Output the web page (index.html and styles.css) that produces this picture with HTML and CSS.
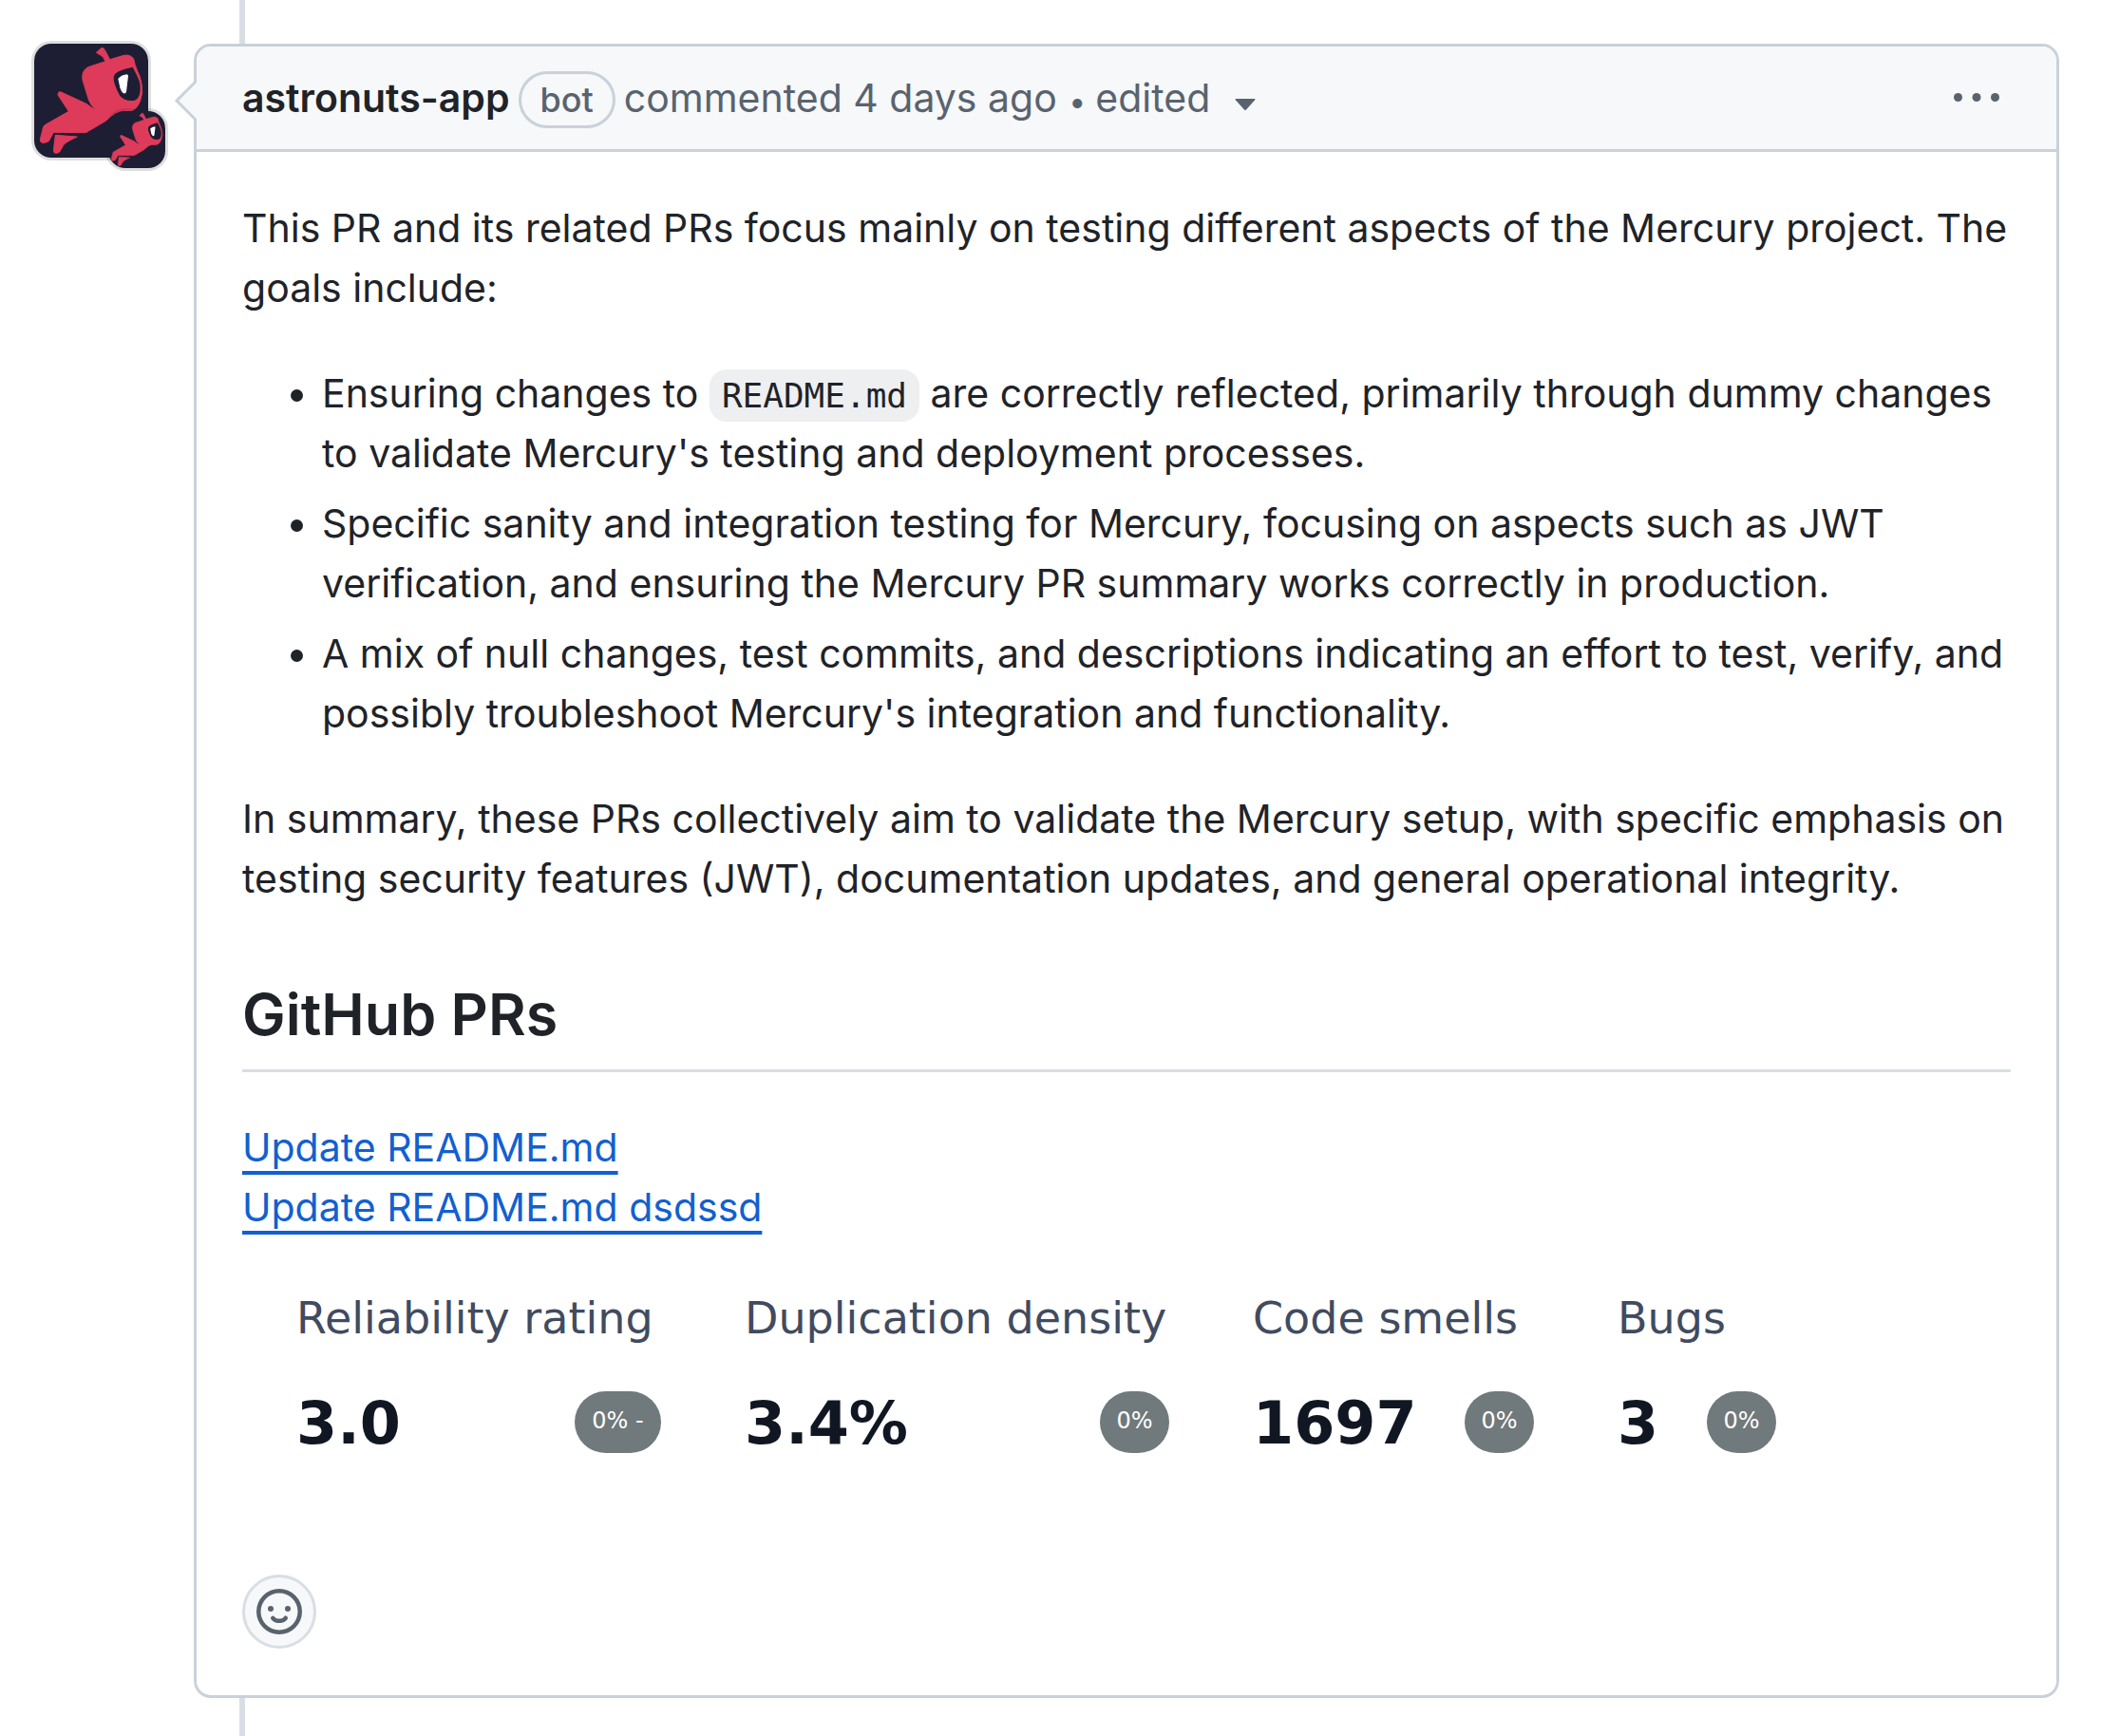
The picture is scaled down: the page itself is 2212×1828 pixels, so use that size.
FILE: index.html
```html
<!DOCTYPE html>
<html lang="en">
<head>
<meta charset="utf-8">
<title>Pull request comment</title>
<link rel="stylesheet" href="styles.css">
</head>
<body>
<svg class="defs" aria-hidden="true">
  <symbol id="astronaut" viewBox="0 0 360 360">
    <rect width="360" height="360" fill="#1d1e33"/>
    <g fill="#de3b5b" stroke="#de3b5b" stroke-width="3" stroke-linejoin="round">
      <path d="M196 28 L212 14 Q219 11 223 20 L239 50 L283 37 Q304 33 314 48 L319 68 Q326 88 334 105 Q342 130 341 155 Q337 182 326 198 Q316 211 303 213 L275 213 Q255 217 243 229 L226 244 L163 281 L61 280 L46 308 Q37 314 24 313 Q18 310 19 302 L29 263 Q31 258 37 255 L109 214 L75 162 Q74 151 83 152 L165 190 Q180 203 197 210 Q178 196 172 177 L153 115 Q148 86 170 74 L225 56 Q218 40 211 37 Z"/>
      <path d="M67 289 L136 294 Q105 308 93 319 L80 342 Q74 348 64 345 Q60 340 62 330 Z"/>
    </g>
    <path d="M311 74 Q322 93 332 118 Q338 142 332 162 Q326 180 310 180 Q286 182 271 165 Q261 148 255 130 Q249 111 252 103 Q255 94 266 88 Q288 78 311 74 Z" fill="#1d1e33"/>
    <path d="M265 111 Q276 98 294 97 L297 101 L291 152 Q288 160 281 156 Q274 150 271 139 Z" fill="#fff"/>
  </symbol>
</svg>
<main class="timeline-item">
  <a class="avatars" href="#profile" aria-label="astronuts-app">
    <svg class="avatar"><use href="#astronaut"/></svg>
    <svg class="avatar avatar-small"><use href="#astronaut"/></svg>
  </a>
  <article class="comment">
    <svg class="pointer" viewBox="0 0 24 46" aria-hidden="true"><path d="M24 2 L3 23 L24 44" fill="#f6f8fa" stroke="#c9d1d9" stroke-width="3"/></svg>
    <header class="comment-header">
      <a class="author" href="#profile">astronuts-app</a>
      <span class="label">bot</span>
      <span>commented <a class="muted" href="#comment">4 days ago</a> <span class="dot">•</span></span>
      <button class="edited" type="button">edited
        <svg class="caret" viewBox="0 0 22 12" aria-hidden="true"><path d="M1 0 H21 Q22 0 21 1.500 L12 11.500 Q11 12.500 10 11.500 L1 1.500 Q0 0 1 0 Z" fill="currentColor"/></svg>
      </button>
      <button class="more" type="button" aria-label="Show options">
        <svg viewBox="0 0 48 9" aria-hidden="true"><g fill="currentColor"><circle cx="4.500" cy="4.500" r="4.500"/><circle cx="24" cy="4.500" r="4.500"/><circle cx="43.500" cy="4.500" r="4.500"/></g></svg>
      </button>
    </header>
    <div class="comment-body">
      <p>This PR and its related PRs focus mainly on testing different aspects of the Mercury project. The goals include:</p>
      <ul>
        <li>Ensuring changes to <code>README.md</code> are correctly reflected, primarily through dummy changes to validate Mercury's testing and deployment processes.</li>
        <li>Specific sanity and integration testing for Mercury, focusing on aspects such as JWT verification, and ensuring the Mercury PR summary works correctly in production.</li>
        <li>A mix of null changes, test commits, and descriptions indicating an effort to test, verify, and possibly troubleshoot Mercury's integration and functionality.</li>
      </ul>
      <p>In summary, these PRs collectively aim to validate the Mercury setup, with specific emphasis on testing security features (JWT), documentation updates, and general operational integrity.</p>
      <h2>GitHub PRs</h2>
      <div class="links">
        <a href="#pr-1">Update README.md</a><br>
        <a href="#pr-2">Update README.md dsdssd</a>
      </div>
      <section class="metrics" aria-label="Code quality">
        <div class="metric"><h3>Reliability rating</h3><div class="reading"><strong>3.0</strong><span class="change change-wide">0% -</span></div></div>
        <div class="metric"><h3>Duplication density</h3><div class="reading"><strong>3.4%</strong><span class="change">0%</span></div></div>
        <div class="metric"><h3>Code smells</h3><div class="reading"><strong>1697</strong><span class="change">0%</span></div></div>
        <div class="metric"><h3>Bugs</h3><div class="reading"><strong>3</strong><span class="change">0%</span></div></div>
      </section>
      <button class="react" type="button" aria-label="Add a reaction">
        <svg viewBox="0 0 16 16" aria-hidden="true"><path fill="currentColor" d="M8 0a8 8 0 1 1 0 16A8 8 0 0 1 8 0ZM1.500 8a6.500 6.500 0 1 0 13 0 6.500 6.500 0 0 0-13 0Zm3.820 1.636a.75.75 0 0 1 1.038.175l.007.009c.103.118.22.222.35.31.264.178.683.37 1.285.37.602 0 1.020-.192 1.285-.371.130-.088.247-.192.350-.310l.007-.008a.75.75 0 0 1 1.222.870l-.022.030c-.182.248-.422.472-.710.666-.485.330-1.200.623-2.132.623s-1.647-.293-2.132-.623a3.200 3.200 0 0 1-.710-.666l-.015-.020-.005-.007-.002-.002v-.001a.752.752 0 0 1 .183-1.044ZM6 7a1 1 0 1 1-2 0 1 1 0 0 1 2 0Zm6 0a1 1 0 1 1-2 0 1 1 0 0 1 2 0Z"/></svg>
      </button>
    </div>
  </article>
</main>
</body>
</html>
```
FILE: styles.css
```css
* {
  box-sizing: border-box;
}

body {
  margin: 0;
  background: #fff;
  color: #1f2328;
  font: 41px/63px Inter, "Noto Sans", sans-serif;
}

.defs {
  position: absolute;
  width: 0;
  height: 0;
}

.timeline-item {
  position: relative;
  display: flex;
  align-items: flex-start;
  gap: 48px;
  min-height: 100vh;
  padding: 46px 44px 40px 36px;
}

/* Timeline rail behind the comment */
.timeline-item::before {
  content: "";
  position: absolute;
  top: 0;
  bottom: 0;
  left: 252px;
  width: 6px;
  background: #d8dee4;
}

.avatars {
  position: relative;
  flex: none;
  width: 120px;
  height: 120px;
}

.avatar {
  display: block;
  width: 120px;
  height: 120px;
  border-radius: 18px;
  box-shadow: 0 0 0 3px rgb(31 35 40 / 0.15);
}

.avatar-small {
  position: absolute;
  right: -18px;
  bottom: -11px;
  width: 60px;
  height: 60px;
}

.comment {
  position: relative;
  flex: 1;
  min-width: 0;
  border: 3px solid #c9d1d9;
  border-radius: 18px;
  background: #fff;
}

.pointer {
  position: absolute;
  top: 34px;
  left: -24px;
  width: 24px;
  height: 46px;
}

.comment-header {
  display: flex;
  align-items: baseline;
  gap: 9px;
  padding: 23px 60px 22px 48px;
  border-bottom: 3px solid #c9d1d9;
  border-radius: 15px 15px 0 0;
  background: #f6f8fa;
  color: #59636e;
}

button {
  padding: 0;
  border: 0;
  background: none;
  color: inherit;
  font: inherit;
}

.author {
  color: #1f2328;
  font-weight: 600;
  text-decoration: none;
}

.muted {
  color: inherit;
  text-decoration: none;
}

.dot {
  margin: 0 1px;
  font-size: 32px;
  line-height: 1;
}

.label {
  padding: 0 20px;
  border: 3px solid #c9d1d9;
  border-radius: 30px;
  font-size: 36px;
  font-weight: 500;
  line-height: 54px;
}

.edited {
  display: flex;
  align-items: center;
  gap: 26px;
}

.caret {
  width: 22px;
  height: 12px;
  margin-top: 12px;
}

.more {
  display: flex;
  align-items: center;
  align-self: flex-start;
  height: 60px;
  margin-left: auto;
}

.more svg {
  width: 48px;
  height: 9px;
}

.comment-body {
  padding: 49px 48px;
}

p,
ul {
  margin: 0 0 48px;
}

ul {
  padding-left: 84px;
}

li + li {
  margin-top: 11px;
}

code {
  padding: 7px 13px;
  border-radius: 18px;
  background: #eeeff1;
  font: 36px "DejaVu Sans Mono", monospace;
}

h2 {
  margin: 72px 0 48px;
  padding-bottom: 18px;
  border-bottom: 3px solid #d8dee4;
  font-size: 61px;
  font-weight: 600;
  line-height: 79px;
}

.links a {
  color: #1260d0;
  text-decoration-thickness: 4px;
  text-decoration-skip-ink: none;
  text-underline-offset: 10px;
}

.metrics {
  display: grid;
  grid-template-columns: 384px 447px 296px 167px;
  gap: 88px;
  margin: 55px 57px 123px;
  font-family: "DejaVu Sans", sans-serif;
}

h3 {
  margin: 0 0 45px;
  color: #414b5f;
  font-size: 46px;
  font-weight: 400;
  line-height: 60px;
}

.reading {
  display: flex;
  align-items: center;
  justify-content: space-between;
}

.reading strong {
  color: #111722;
  font-size: 62px;
  line-height: 72px;
}

.change {
  width: 73px;
  height: 65px;
  margin-bottom: 4px;
  border-radius: 33px;
  background: #70797b;
  color: #fff;
  font-size: 24px;
  line-height: 62px;
  text-align: center;
}

.change-wide {
  width: 91px;
}

.react {
  display: grid;
  place-items: center;
  width: 78px;
  height: 78px;
  border: 3px solid #d8dee4;
  border-radius: 50%;
  background: #f6f8fa;
  color: #59636e;
}

.react svg {
  width: 48px;
  height: 48px;
}
```
